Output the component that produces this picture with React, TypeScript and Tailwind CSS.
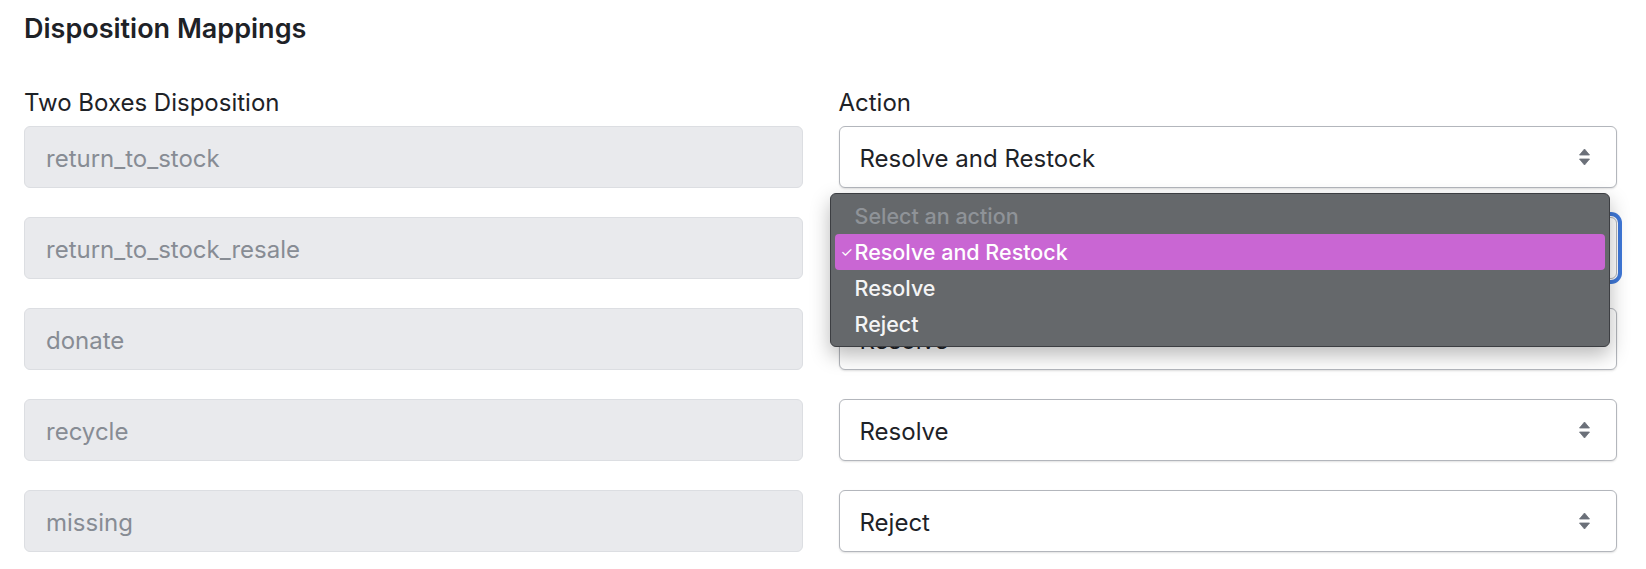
import type { ReactNode } from 'react'

const rows = [
  { key: 'return_to_stock', action: 'Resolve and Restock' },
  { key: 'return_to_stock_resale', action: 'Resolve and Restock', open: true },
  { key: 'donate', action: 'Resolve' },
  { key: 'recycle', action: 'Resolve' },
  { key: 'missing', action: 'Reject' },
]

const options = ['Resolve and Restock', 'Resolve', 'Reject']

function UpDown() {
  return (
    <svg width="11" height="17" viewBox="0 0 11 17" className="text-[#6b7079]">
      <path d="M5.5 0.5 L10.5 6.5 H0.5 Z" fill="currentColor" strokeLinejoin="round" stroke="currentColor" strokeWidth="0.8" />
      <path d="M0.5 10.5 H10.5 L5.5 16.5 Z" fill="currentColor" strokeLinejoin="round" stroke="currentColor" strokeWidth="0.8" />
    </svg>
  )
}

function MenuItem({ children, active, muted }: { children: ReactNode; active?: boolean; muted?: boolean }) {
  return (
    <div
      className={
        'flex h-9 items-center rounded-[4px] text-[21.5px] font-medium ' +
        (active ? 'bg-[#c966d3] text-white' : muted ? 'text-[#8f9398]' : 'text-[#f4f4f5]')
      }
    >
      <span className="w-5 pl-[6px] text-[14px] font-normal leading-none">{active ? '✓' : ''}</span>
      <span>{children}</span>
    </div>
  )
}

function ActionMenu() {
  return (
    <div className="absolute -left-[9px] -top-6 z-10 w-[780px] rounded-md border border-[#3c3e42] bg-[#65686b] p-[4px] shadow-[0_8px_20px_rgba(0,0,0,0.28)]">
      <MenuItem muted>Select an action</MenuItem>
      <MenuItem active>{options[0]}</MenuItem>
      <MenuItem>{options[1]}</MenuItem>
      <MenuItem>{options[2]}</MenuItem>
    </div>
  )
}

export default function App() {
  return (
    <div className="min-h-screen bg-white pl-6 pr-[29px] pt-[13px] font-['Inter',sans-serif] text-[#1e2227]">
      <h2 className="text-[27px] font-semibold leading-8">Disposition Mappings</h2>

      <div className="mt-[42px] grid grid-cols-2 gap-x-9 text-[24px] leading-8">
        <div>Two Boxes Disposition</div>
        <div>Action</div>
      </div>

      <div className="mt-[7px] flex flex-col gap-[29px]">
        {rows.map((row) => (
          <div key={row.key} className="grid grid-cols-2 gap-x-9">
            <input
              readOnly
              value={row.key}
              className="h-[62px] w-full rounded-md border border-[#dcdee2] bg-[#e9eaed] px-[21px] pt-[2px] text-[24px] text-[#878c94] outline-none"
            />
            <div className="relative">
              <select
                value={row.action}
                onChange={() => {}}
                className={
                  'h-[62px] w-full appearance-none rounded-md border border-[#b3b6bc] bg-white px-5 pt-[3px] text-[24px] text-[#1e2227] shadow-[0_1px_2px_rgba(0,0,0,0.12)] outline-none ' +
                  (row.open ? 'ring-4 ring-[#3f78d8] ring-offset-1' : '')
                }
              >
                <option value="">Select an action</option>
                {options.map((o) => (
                  <option key={o} value={o}>
                    {o}
                  </option>
                ))}
              </select>
              <span className="pointer-events-none absolute right-[27px] top-1/2 flex -translate-y-1/2">
                <UpDown />
              </span>
              {row.open && <ActionMenu />}
            </div>
          </div>
        ))}
      </div>
    </div>
  )
}
